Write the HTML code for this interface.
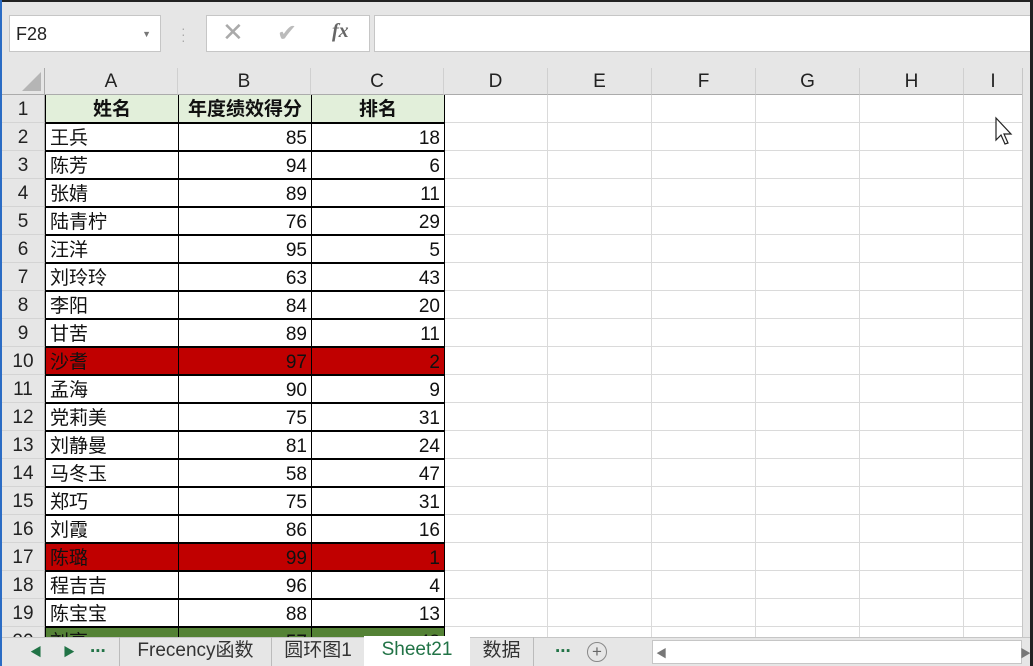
<!DOCTYPE html>
<html><head><meta charset="utf-8"><style>
*{margin:0;padding:0;box-sizing:border-box}
body{width:1033px;height:666px;overflow:hidden;background:#fff;position:relative;font-family:"Liberation Sans","Noto Sans CJK SC",sans-serif}
.a{position:absolute}
.top{left:0;top:0;width:1033px;height:68px;background:#e6e6e6;border-top:2px solid #222}
.box{background:#fff;border:1px solid #c6c6c6}
.hdr{top:68px;height:27px;background:#e6e6e6;border-bottom:1px solid #ababab;border-right:1px solid #d0d0d0;text-align:center;font-size:19px;line-height:28px;color:#222}
.rh{left:2px;width:43px;height:28px;background:#e6e6e6;border-bottom:1px solid #d4d4d4;border-right:1px solid #ababab;text-align:center;font-size:19px;line-height:30px;color:#222}
.c{height:28px;font-size:19px;line-height:30px;color:#111;padding:0 4px;white-space:nowrap;overflow:hidden}
.vl{top:95px;width:1px;height:542px;background:#dadada}
.hl{left:444px;width:578px;height:1px;background:#dadada}
</style></head><body>
<div class="a top"></div>
<div class="a" style="left:0;top:0;width:2px;height:666px;background:#2b6cc4"></div>
<div class="a box" style="left:9px;top:15px;width:152px;height:37px;font-size:18px;line-height:36px;padding-left:6px;color:#222">F28<span class="a" style="right:9px;top:0;font-size:9px;color:#777">▼</span></div>
<div class="a" style="left:181px;top:25px;color:#aaa;font-size:14px;line-height:6px">·<br>·<br>·</div>
<div class="a box" style="left:206px;top:15px;width:164px;height:37px"></div>
<div class="a" style="left:222px;top:17px;font-size:26px;color:#aaa">✕</div>
<div class="a" style="left:277px;top:19px;font-size:24px;color:#bbb">✔</div>
<div class="a" style="left:332px;top:20px;font-size:20px;color:#666;font-family:'Liberation Serif',serif;font-style:italic;font-weight:bold">fx</div>
<div class="a box" style="left:374px;top:15px;width:670px;height:37px"></div>
<div class="a" style="left:2px;top:68px;width:43px;height:27px;background:#e6e6e6;border-right:1px solid #ababab;border-bottom:1px solid #ababab"></div>
<div class="a" style="left:22px;top:72px;width:0;height:0;border-left:19px solid transparent;border-bottom:19px solid #b5b5b5"></div>
<div class="a hdr" style="left:45px;width:133px">A</div>
<div class="a hdr" style="left:178px;width:133px">B</div>
<div class="a hdr" style="left:311px;width:133px">C</div>
<div class="a hdr" style="left:444px;width:104px">D</div>
<div class="a hdr" style="left:548px;width:104px">E</div>
<div class="a hdr" style="left:652px;width:104px">F</div>
<div class="a hdr" style="left:756px;width:104px">G</div>
<div class="a hdr" style="left:860px;width:104px">H</div>
<div class="a hdr" style="left:964px;width:58px;border-right:none">I</div>
<div class="a vl" style="left:547px"></div><div class="a vl" style="left:651px"></div><div class="a vl" style="left:755px"></div><div class="a vl" style="left:859px"></div><div class="a vl" style="left:963px"></div>
<div id="g"></div>
<div class="a" style="left:1022px;top:68px;width:8px;height:570px;background:#e6e6e6;border-left:1px solid #c6c6c6"></div>
<div class="a" style="left:1030px;top:0;width:3px;height:666px;background:#222"></div>
<div class="a" style="left:2px;top:637px;width:1028px;height:29px;background:#e6e6e6;border-top:1px solid #c6c6c6;font-size:19px;line-height:28px;color:#333"></div>
<div class="a" style="left:30px;top:643px;color:#217346;font-size:12px">◀</div>
<div class="a" style="left:63px;top:643px;color:#217346;font-size:12px">▶</div>
<div class="a" style="left:90px;top:636px;color:#217346;font-size:19px;font-weight:bold">...</div>
<div class="a" style="left:119px;top:637px;width:152px;height:29px;border-left:1px solid #bbb;font-size:19px;line-height:28px;text-align:center;color:#333">Frecency函数</div>
<div class="a" style="left:271px;top:637px;width:93px;height:29px;border-left:1px solid #bbb;font-size:19px;line-height:28px;text-align:center;color:#333">圆环图1</div>
<div class="a" style="left:364px;top:636px;width:106px;height:30px;background:#fff;font-size:19px;line-height:28px;text-align:center;color:#217346">Sheet21</div>
<div class="a" style="left:470px;top:637px;width:64px;height:29px;border-right:1px solid #bbb;font-size:19px;line-height:28px;text-align:center;color:#333">数据</div>
<div class="a" style="left:555px;top:636px;color:#217346;font-size:19px;font-weight:bold">...</div>
<div class="a" style="left:587px;top:642px;width:20px;height:20px;border:1px solid #888;border-radius:50%;text-align:center;font-size:17px;line-height:18px;color:#666">+</div>
<div class="a" style="left:652px;top:640px;width:370px;height:24px;background:#fff;border:1px solid #c6c6c6"></div>
<div class="a" style="left:656px;top:645px;color:#777;font-size:11px">◀</div>
<div class="a" style="left:1020px;top:645px;color:#777;font-size:11px">▶</div>
<div class="a" style="left:996px;top:118px;width:0;height:0;border-left:2px solid #222;"></div>
<svg class="a" style="left:994px;top:116px" width="22" height="32" viewBox="0 0 22 32"><path d="M2 2 L2 24 L7 19 L11 28 L14 27 L10 18 L17 18 Z" fill="#fff" stroke="#222" stroke-width="1.2"/></svg>
<script>
var d=[["姓名","年度绩效得分","排名"],["王兵",85,18],["陈芳",94,6],["张婧",89,11],["陆青柠",76,29],["汪洋",95,5],["刘玲玲",63,43],["李阳",84,20],["甘苦",89,11],["沙耆",97,2],["孟海",90,9],["党莉美",75,31],["刘静曼",81,24],["马冬玉",58,47],["郑巧",75,31],["刘霞",86,16],["陈璐",99,1],["程吉吉",96,4],["陈宝宝",88,13],["刘亮",57,48]];
var h="";
for(var i=0;i<20;i++){var t=95+i*28;
h+='<div class="a rh" style="top:'+t+'px">'+(i+1)+'</div>';
h+='<div class="a hl" style="top:'+(t+27)+'px"></div>';
var bg=i==0?"#e2efda":(i==9||i==16)?"#c00000":i==19?"#548235":"#fff";
var xs=[45,178,311];
for(var j=0;j<3;j++){var al=i==0?"center":(j==0?"left":"right");var fw=i==0?"bold":"normal";
h+='<div class="a c" style="left:'+xs[j]+'px;top:'+t+'px;width:134px;background:'+bg+';text-align:'+al+';font-weight:'+fw+';border:1px solid #000;border-top:'+(i==0?'none':'1px solid #000')+'">'+d[i][j]+'</div>';}}
document.getElementById("g").innerHTML=h;
</script>
</body></html>
